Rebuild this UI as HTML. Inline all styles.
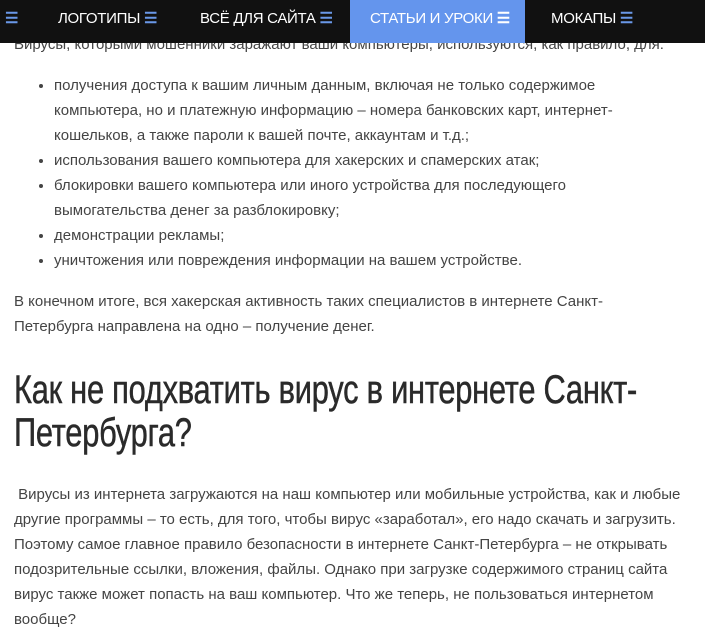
<!DOCTYPE html>
<html><head><meta charset="utf-8"><style>
body{margin:0;width:705px;height:632px;overflow:hidden;background:#fff;font-family:"Liberation Sans",sans-serif;color:#444;}
.nav{position:absolute;top:0;left:0;width:705px;height:43px;background:#111;color:#fff;font-size:15px;}
.nav span{position:absolute;top:0;height:43px;line-height:38px;white-space:nowrap;letter-spacing:-0.3px}
.h{color:#6a98e8;font-weight:bold;}
.act{background:#6495ed;}
.c{position:absolute;left:14px;width:690px;font-size:15px;line-height:25px;white-space:nowrap;letter-spacing:0px}
ul{margin:0;padding-left:40px;}
h2{margin:0;font-weight:normal;color:#2a2a2a;font-size:40px;line-height:43px;white-space:nowrap;transform:scaleX(0.77);transform-origin:left top;letter-spacing:-0.3px;-webkit-text-stroke:0.5px #2a2a2a}
p{margin:0}
</style></head><body>
<div class="c" style="top:32px">Вирусы, которыми мошенники заражают ваши компьютеры, используются, как правило, для:</div>
<div class="nav">
<span class="h" style="left:5px">☰</span>
<span style="left:58px">ЛОГОТИПЫ <b class="h">☰</b></span>
<span style="left:200px">ВСЁ ДЛЯ САЙТА <b class="h">☰</b></span>
<span class="act" style="left:350px;width:175px;padding-left:20px;box-sizing:border-box">СТАТЬИ И УРОКИ <b>☰</b></span>
<span style="left:551px">МОКАПЫ <b class="h">☰</b></span>
</div>
<div class="c" style="top:73px"><ul>
<li>получения доступа к вашим личным данным, включая не только содержимое<br>компьютера, но и платежную информацию – номера банковских карт, интернет-<br>кошельков, а также пароли к вашей почте, аккаунтам и т.д.;</li>
<li>использования вашего компьютера для хакерских и спамерских атак;</li>
<li>блокировки вашего компьютера или иного устройства для последующего<br>вымогательства денег за разблокировку;</li>
<li>демонстрации рекламы;</li>
<li>уничтожения или повреждения информации на вашем устройстве.</li>
</ul></div>
<div class="c" style="top:289px">В конечном итоге, вся хакерская активность таких специалистов в интернете Санкт-<br>Петербурга направлена на одно – получение денег.</div>
<div class="c" style="top:369px"><h2>Как не подхватить вирус в интернете Санкт-<br>Петербурга?</h2></div>
<div class="c" style="top:482px"><p>&nbsp;Вирусы из интернета загружаются на наш компьютер или мобильные устройства, как и любые<br>другие программы – то есть, для того, чтобы вирус «заработал», его надо скачать и загрузить.<br>Поэтому самое главное правило безопасности в интернете Санкт-Петербурга – не открывать<br>подозрительные ссылки, вложения, файлы. Однако при загрузке содержимого страниц сайта<br>вирус также может попасть на ваш компьютер. Что же теперь, не пользоваться интернетом<br>вообще?</p></div>
</body></html>
